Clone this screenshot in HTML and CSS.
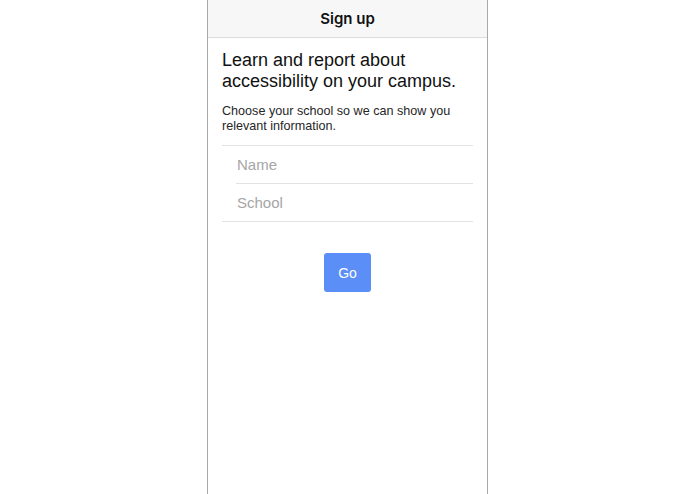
FILE: index.html
```html
<!DOCTYPE html>
<html lang="en">
  <head>
    <meta charset="UTF-8" />
    <meta name="viewport" content="width=device-width, initial-scale=1.0" />
    <title>Sign up</title>
    <link rel="stylesheet" href="styles.css">
  </head>
  <body>
    <div class="phone">
      <header class="nav-bar">
        <h1>Sign up</h1>
      </header>

      <main class="content">
        <h2 class="intro">Learn and report about accessibility on your campus.</h2>
        <p class="hint">Choose your school so we can show you relevant information.</p>

        <form class="signup-form">
          <div class="fields">
            <input class="field" type="text" placeholder="Name" />
            <input class="field" type="text" placeholder="School" />
          </div>
          <div class="actions">
            <button class="go-button" type="submit">Go</button>
          </div>
        </form>
      </main>
    </div>
  </body>
</html>
```

FILE: styles.css
```css
html,
body {
  height: 100%;
}

body {
  font-family: "Liberation Sans", Arial, sans-serif;
  margin: 0;
  padding: 0;
  background-color: #fff;
  color: #111;
}

.phone {
  width: 279px;
  height: 100%;
  margin: 0 auto;
  border-left: 1px solid #a9a9a9;
  border-right: 1px solid #a9a9a9;
  background-color: #fff;
}

.nav-bar {
  height: 37px;
  background-color: #f7f7f7;
  border-bottom: 1px solid #dcdcdc;
  display: flex;
  align-items: center;
  justify-content: center;
}

.nav-bar h1 {
  margin: 0;
  font-family: Inter, "Liberation Sans", sans-serif;
  font-size: 15px;
  font-weight: 600;
  color: #111;
}

.content {
  padding: 0 14px;
}

.intro {
  margin: 12px 0 0;
  font-size: 18px;
  font-weight: normal;
  line-height: 21px;
}

.hint {
  margin: 12px 0 0;
  font-size: 12.6px;
  line-height: 15px;
  color: #262626;
}

.fields {
  margin-top: 11px;
  border-top: 1px solid #e2e2e2;
  border-bottom: 1px solid #e2e2e2;
  display: flex;
  flex-direction: column;
}

.field {
  height: 37px;
  margin-left: 14px;
  padding: 0 1px;
  border: none;
  outline: none;
  font-family: inherit;
  font-size: 15px;
  color: #111;
  background: transparent;
}

.field + .field {
  border-top: 1px solid #e2e2e2;
}

.field::placeholder {
  color: #a6a6a6;
}

.actions {
  display: flex;
  justify-content: center;
  margin-top: 31px;
}

.go-button {
  width: 47px;
  height: 39px;
  border: none;
  border-radius: 3px;
  background-color: #5b8ef6;
  color: #fff;
  font-family: inherit;
  font-size: 14px;
  cursor: pointer;
}
```
